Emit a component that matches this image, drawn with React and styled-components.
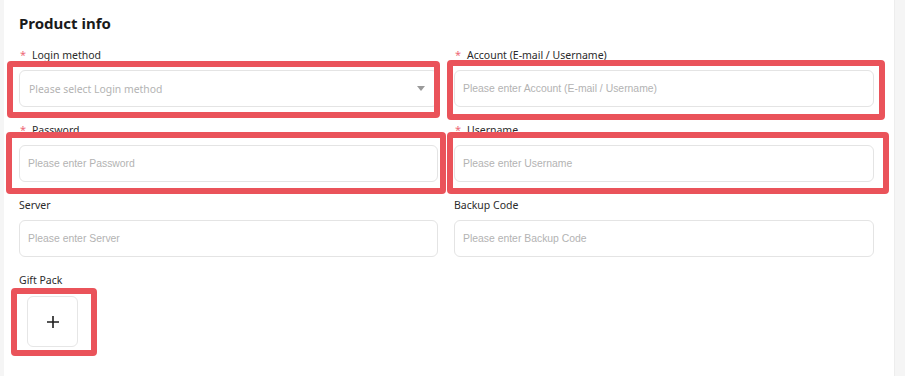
import styled, { createGlobalStyle } from "styled-components"

const GlobalStyle = createGlobalStyle`
  html, body {
    margin: 0;
    padding: 0;
    background: #f5f5f5;
  }
  * {
    box-sizing: border-box;
  }
`

const fields = [
  { label: "Login method", required: true, select: true, mark: [9, 2, 11, 12] },
  { label: "Account (E-mail / Username)", required: true, mark: [10, 11, 13, 7] },
  { label: "Password", required: true, mark: [13, 8, 12, 13] },
  { label: "Username", required: true, mark: [13, 15, 12, 7] },
  { label: "Server" },
  { label: "Backup Code" },
]

const ProductInfo = () => {
  return (
    <>
      <GlobalStyle />
      <Card>
        <Title>Product info</Title>
        <Grid>
          {fields.map((f) => (
            <Field key={f.label}>
              <Label>
                {f.required && <Star>*</Star>}
                {f.label}
              </Label>
              <Control>
                {f.select ? (
                  <SelectBox>
                    <span>Please select {f.label}</span>
                    <Caret />
                  </SelectBox>
                ) : (
                  <Input placeholder={`Please enter ${f.label}`} />
                )}
                {f.mark && <Highlight $m={f.mark} />}
              </Control>
            </Field>
          ))}
        </Grid>
        <Gift>
          <Label>Gift Pack</Label>
          <UploadSlot>
            <Upload>
              <svg width="14" height="14" viewBox="0 0 14 14">
                <path d="M7 1v12M1 7h12" stroke="#1f1f1f" strokeWidth="1.6" />
              </svg>
            </Upload>
            <Highlight $m={[8, 19, 9, 16]} />
          </UploadSlot>
        </Gift>
      </Card>
    </>
  )
}

const Card = styled.main`
  margin-left: 4px;
  width: 891px;
  min-height: 376px;
  background: #fff;
  border-right: 1px solid #ededed;
  padding: 13px 0 0 15px;
  font-family: "Noto Sans", "Open Sans", sans-serif;
`

const Title = styled.h2`
  margin: 0 0 14px;
  font-size: 15px;
  line-height: 20px;
  font-weight: 700;
  color: #1a1a1a;
`

const Grid = styled.div`
  display: grid;
  grid-template-columns: 419px 420px;
  column-gap: 16px;
  row-gap: 15px;
`

const Field = styled.div`
  display: flex;
  flex-direction: column;
  gap: 7px;
`

const Label = styled.div`
  display: flex;
  align-items: center;
  font-size: 10.5px;
  line-height: 16px;
  color: #2b2b2b;
`

const Star = styled.span`
  color: #ee6b78;
  width: 13px;
  padding-left: 1px;
  font-size: 11px;
`

const Control = styled.div`
  position: relative;
`

const Input = styled.input`
  width: 100%;
  height: 37px;
  border: 1px solid #e4e4e4;
  border-radius: 6px;
  padding: 0 8px;
  font-family: "Liberation Sans", Arial, sans-serif;
  font-size: 10.4px;
  color: #333;
  outline: none;

  &::placeholder {
    color: #b3b3b3;
  }
`

const SelectBox = styled.div`
  height: 37px;
  border: 1px solid #e4e4e4;
  border-radius: 6px;
  padding: 0 10px 0 9px;
  display: flex;
  align-items: center;
  justify-content: space-between;
  font-size: 10.4px;
  color: #b3b3b3;
`

const Caret = styled.i`
  width: 0;
  height: 0;
  margin-right: 2px;
  border-left: 4px solid transparent;
  border-right: 4px solid transparent;
  border-top: 5px solid #9a9a9a;
`

const Highlight = styled.div`
  position: absolute;
  top: ${(p) => -p.$m[0]}px;
  right: ${(p) => -p.$m[1]}px;
  bottom: ${(p) => -p.$m[2]}px;
  left: ${(p) => -p.$m[3]}px;
  border: 6px solid #ea535a;
  border-radius: 4px;
  pointer-events: none;
`

const Gift = styled.div`
  margin-top: 15px;
  display: flex;
  flex-direction: column;
  gap: 8px;
`

const UploadSlot = styled.div`
  position: relative;
  align-self: flex-start;
  margin-left: 8px;
`

const Upload = styled.div`
  width: 51px;
  height: 51px;
  border: 1px solid #e6e6e6;
  border-radius: 6px;
  display: flex;
  align-items: center;
  justify-content: center;
`

export default ProductInfo
